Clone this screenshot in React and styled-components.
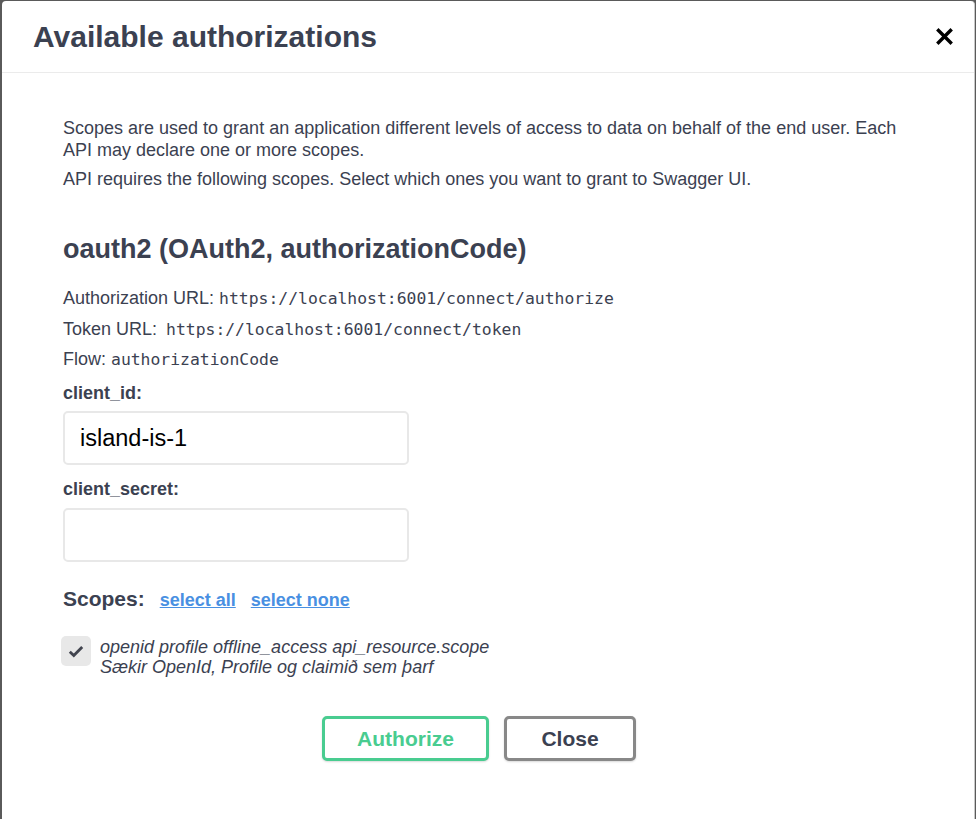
import React from "react";
import styled, { createGlobalStyle } from "styled-components";

const GlobalStyle = createGlobalStyle`
  html, body {
    margin: 0;
    padding: 0;
    background: #5a5a5a;
    font-family: "Liberation Sans", Arial, sans-serif;
    color: #3b4151;
  }
`;

const Backdrop = styled.div`
  padding: 1px 0 0 2px;
  height: 818px;
  overflow: hidden;
`;

const Modal = styled.div`
  width: 972px;
  min-height: 830px;
  background: #fff;
  border-right: 1px solid #c8c8c8;
  border-radius: 4px 4px 0 0;
`;

const Header = styled.header`
  display: flex;
  align-items: center;
  justify-content: space-between;
  height: 71px;
  padding: 0 21px 0 31px;
  border-bottom: 1px solid #ebebeb;
`;

const Title = styled.h3`
  margin: 0;
  font-size: 30px;
  font-weight: bold;
  color: #3b4151;
`;

const CloseIcon = styled.button`
  display: flex;
  padding: 0;
  border: none;
  background: none;
  cursor: pointer;
`;

const Body = styled.div`
  padding: 44px 61px 40px 61px;
`;

const Text = styled.p`
  margin: 0 0 7px;
  font-size: 18px;
  line-height: 22px;
`;

const SchemeTitle = styled.h4`
  margin: 43px 0 22px;
  font-size: 27px;
  line-height: 32px;
  font-weight: bold;
`;

const Info = styled.p`
  margin: 0 0 7.5px;
  font-size: 18px;
  line-height: 22px;
`;

const Code = styled.code`
  font-family: "DejaVu Sans Mono", "Liberation Mono", monospace;
  font-size: 16.4px;
  margin-left: ${(p) => p.$gap || 0}px;
`;

const Label = styled.label`
  display: block;
  margin-top: ${(p) => p.$top}px;
  font-size: 18px;
  line-height: 22px;
  font-weight: bold;
`;

const Input = styled.input`
  display: block;
  box-sizing: border-box;
  width: 346px;
  height: 54px;
  margin-top: ${(p) => p.$top}px;
  padding: 0 15px;
  border: 2px solid #e8e8e8;
  border-radius: 5px;
  background: #fff;
  font-family: "Liberation Sans", Arial, sans-serif;
  font-size: 23.5px;
  color: #000;
  outline: none;
`;

const ScopesRow = styled.div`
  display: flex;
  align-items: baseline;
  gap: 15px;
  margin-top: 24px;
`;

const ScopesTitle = styled.h2`
  margin: 0;
  font-size: 21px;
  line-height: 26px;
  font-weight: bold;
`;

const LinkButton = styled.a`
  font-size: 18px;
  font-weight: bold;
  color: #4990e2;
  text-decoration: underline;
  cursor: pointer;
`;

const ScopeItem = styled.div`
  display: flex;
  align-items: flex-start;
  gap: 9px;
  margin: 24px 0 0 -2px;
`;

const CheckBox = styled.span`
  display: flex;
  align-items: center;
  justify-content: center;
  flex: none;
  width: 30px;
  height: 30px;
  border-radius: 5px;
  background: #e8e8e8;
`;

const ScopeText = styled.div`
  padding-top: 1px;
  font-size: 18px;
  line-height: 20px;
  font-style: italic;
`;

const Buttons = styled.div`
  display: flex;
  justify-content: center;
  gap: 15px;
  margin-top: 39px;
  padding-right: 18px;
`;

const Button = styled.button`
  box-sizing: border-box;
  height: 45px;
  width: ${(p) => p.$w}px;
  border: 3px solid ${(p) => (p.$primary ? "#49cc90" : "#888")};
  border-radius: 5px;
  background: #fff;
  box-shadow: 0 1px 2px rgba(0, 0, 0, 0.15);
  font-family: "Liberation Sans", Arial, sans-serif;
  font-size: 21px;
  font-weight: bold;
  color: ${(p) => (p.$primary ? "#49cc90" : "#3b4151")};
  cursor: pointer;
`;

export default function App() {
  return (
    <>
      <GlobalStyle />
      <Backdrop>
        <Modal>
          <Header>
            <Title>Available authorizations</Title>
            <CloseIcon aria-label="Close">
              <svg width="17" height="17" viewBox="0 0 17 17">
                <path
                  d="M2.5 2.5 L14.5 14.5 M14.5 2.5 L2.5 14.5"
                  stroke="#000"
                  strokeWidth="3.4"
                  strokeLinecap="square"
                />
              </svg>
            </CloseIcon>
          </Header>
          <Body>
            <Text>
              Scopes are used to grant an application different levels of
              access to data on behalf of the end user. Each API may declare
              one or more scopes.
            </Text>
            <Text>
              API requires the following scopes. Select which ones you want to
              grant to Swagger UI.
            </Text>
            <SchemeTitle>oauth2 (OAuth2, authorizationCode)</SchemeTitle>
            <Info>
              Authorization URL: <Code>https://localhost:6001/connect/authorize</Code>
            </Info>
            <Info>
              Token URL: <Code $gap={4}>https://localhost:6001/connect/token</Code>
            </Info>
            <Info>
              Flow: <Code>authorizationCode</Code>
            </Info>
            <Label $top={11}>client_id:</Label>
            <Input $top={7} defaultValue="island-is-1" />
            <Label $top={13}>client_secret:</Label>
            <Input $top={8} type="password" />
            <ScopesRow>
              <ScopesTitle>Scopes:</ScopesTitle>
              <LinkButton>select all</LinkButton>
              <LinkButton>select none</LinkButton>
            </ScopesRow>
            <ScopeItem>
              <CheckBox>
                <svg width="16" height="13" viewBox="0 0 16 13">
                  <path
                    d="M1.8 6.8 L5.8 10.6 L14.2 2"
                    fill="none"
                    stroke="#41444e"
                    strokeWidth="2.8"
                  />
                </svg>
              </CheckBox>
              <ScopeText>
                openid profile offline_access api_resource.scope
                <br />
                Sækir OpenId, Profile og claimið sem þarf
              </ScopeText>
            </ScopeItem>
            <Buttons>
              <Button $primary $w={167}>Authorize</Button>
              <Button $w={132}>Close</Button>
            </Buttons>
          </Body>
        </Modal>
      </Backdrop>
    </>
  );
}
